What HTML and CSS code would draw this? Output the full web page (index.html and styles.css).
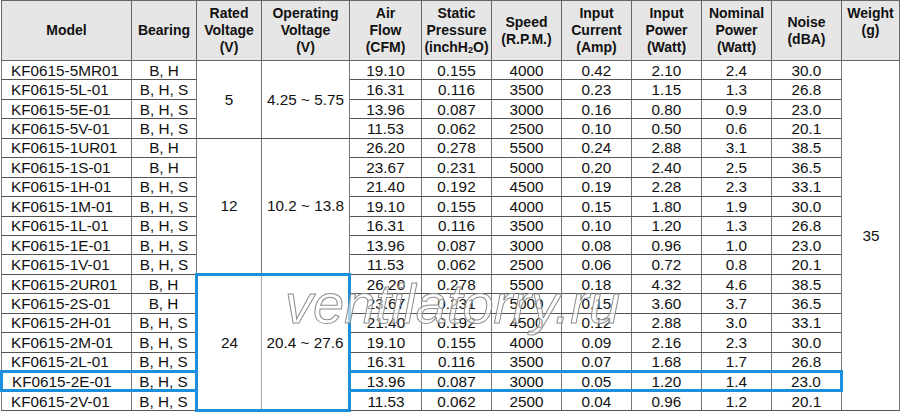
FILE: index.html
```html
<!DOCTYPE html>
<html lang="en">
<head>
<meta charset="utf-8">
<title>KF0615 Specifications</title>
<link rel="stylesheet" href="styles.css">
</head>
<body>
<div class="sheet">
  <table class="spec">
    <colgroup>
      <col class="c-model"><col class="c-bearing"><col class="c-rated"><col class="c-oper">
      <col class="c-air"><col class="c-static"><col class="c-std"><col class="c-std">
      <col class="c-std"><col class="c-std"><col class="c-noise"><col class="c-weight">
    </colgroup>
    <thead>
      <tr>
        <th>Model</th>
        <th>Bearing</th>
        <th>Rated<br>Voltage<br>(V)</th>
        <th>Operating<br>Voltage<br>(V)</th>
        <th>Air<br>Flow<br>(CFM)</th>
        <th>Static<br>Pressure<br>(inchH<sub>2</sub>O)</th>
        <th>Speed<br>(R.P.M.)</th>
        <th>Input<br>Current<br>(Amp)</th>
        <th>Input<br>Power<br>(Watt)</th>
        <th>Nominal<br>Power<br>(Watt)</th>
        <th>Noise<br>(dBA)</th>
        <th class="top">Weight<br>(g)</th>
      </tr>
    </thead>
    <tbody>
      <tr><td class="model">KF0615-5MR01</td><td>B, H</td><td rowspan="4">5</td><td rowspan="4">4.25 ~ 5.75</td><td>19.10</td><td>0.155</td><td>4000</td><td>0.42</td><td>2.10</td><td>2.4</td><td>30.0</td><td rowspan="18">35</td></tr>
      <tr><td class="model">KF0615-5L-01</td><td>B, H, S</td><td>16.31</td><td>0.116</td><td>3500</td><td>0.23</td><td>1.15</td><td>1.3</td><td>26.8</td></tr>
      <tr><td class="model">KF0615-5E-01</td><td>B, H, S</td><td>13.96</td><td>0.087</td><td>3000</td><td>0.16</td><td>0.80</td><td>0.9</td><td>23.0</td></tr>
      <tr><td class="model">KF0615-5V-01</td><td>B, H, S</td><td>11.53</td><td>0.062</td><td>2500</td><td>0.10</td><td>0.50</td><td>0.6</td><td>20.1</td></tr>
      <tr><td class="model">KF0615-1UR01</td><td>B, H</td><td rowspan="7">12</td><td rowspan="7">10.2 ~ 13.8</td><td>26.20</td><td>0.278</td><td>5500</td><td>0.24</td><td>2.88</td><td>3.1</td><td>38.5</td></tr>
      <tr><td class="model">KF0615-1S-01</td><td>B, H</td><td>23.67</td><td>0.231</td><td>5000</td><td>0.20</td><td>2.40</td><td>2.5</td><td>36.5</td></tr>
      <tr><td class="model">KF0615-1H-01</td><td>B, H, S</td><td>21.40</td><td>0.192</td><td>4500</td><td>0.19</td><td>2.28</td><td>2.3</td><td>33.1</td></tr>
      <tr><td class="model">KF0615-1M-01</td><td>B, H, S</td><td>19.10</td><td>0.155</td><td>4000</td><td>0.15</td><td>1.80</td><td>1.9</td><td>30.0</td></tr>
      <tr><td class="model">KF0615-1L-01</td><td>B, H, S</td><td>16.31</td><td>0.116</td><td>3500</td><td>0.10</td><td>1.20</td><td>1.3</td><td>26.8</td></tr>
      <tr><td class="model">KF0615-1E-01</td><td>B, H, S</td><td>13.96</td><td>0.087</td><td>3000</td><td>0.08</td><td>0.96</td><td>1.0</td><td>23.0</td></tr>
      <tr><td class="model">KF0615-1V-01</td><td>B, H, S</td><td>11.53</td><td>0.062</td><td>2500</td><td>0.06</td><td>0.72</td><td>0.8</td><td>20.1</td></tr>
      <tr><td class="model">KF0615-2UR01</td><td>B, H</td><td rowspan="7" class="box-l">24</td><td rowspan="7" class="box-r">20.4 ~ 27.6</td><td>26.20</td><td>0.278</td><td>5500</td><td>0.18</td><td>4.32</td><td>4.6</td><td>38.5</td></tr>
      <tr><td class="model">KF0615-2S-01</td><td>B, H</td><td>23.67</td><td>0.231</td><td>5000</td><td>0.15</td><td>3.60</td><td>3.7</td><td>36.5</td></tr>
      <tr><td class="model">KF0615-2H-01</td><td>B, H, S</td><td>21.40</td><td>0.192</td><td>4500</td><td>0.12</td><td>2.88</td><td>3.0</td><td>33.1</td></tr>
      <tr><td class="model">KF0615-2M-01</td><td>B, H, S</td><td>19.10</td><td>0.155</td><td>4000</td><td>0.09</td><td>2.16</td><td>2.3</td><td>30.0</td></tr>
      <tr><td class="model">KF0615-2L-01</td><td>B, H, S</td><td>16.31</td><td>0.116</td><td>3500</td><td>0.07</td><td>1.68</td><td>1.7</td><td>26.8</td></tr>
      <tr class="hl"><td class="model hl-first">KF0615-2E-01</td><td>B, H, S</td><td>13.96</td><td>0.087</td><td>3000</td><td>0.05</td><td>1.20</td><td>1.4</td><td class="hl-last">23.0</td></tr>
      <tr><td class="model">KF0615-2V-01</td><td>B, H, S</td><td>11.53</td><td>0.062</td><td>2500</td><td>0.04</td><td>0.96</td><td>1.2</td><td>20.1</td></tr>
    </tbody>
  </table>
  <span class="watermark">ventilatorry.ru</span>
</div>
</body>
</html>
```

FILE: styles.css
```css
html, body {
  margin: 0;
  padding: 0;
  background: #ffffff;
}

.sheet {
  position: relative;
  width: 900px;
  height: 412px;
  overflow: hidden;
}

.spec {
  border-collapse: collapse;
  table-layout: fixed;
  width: 898px;
  font-family: "Liberation Sans", Arial, sans-serif;
  color: #111;
}

.c-model { width: 130px; }
.c-bearing { width: 65px; }
.c-rated { width: 65px; }
.c-oper { width: 88px; }
.c-air { width: 72px; }
.c-static { width: 70px; }
.c-std { width: 70px; }
.c-noise { width: 70px; }
.c-weight { width: 58px; }

.spec thead tr {
  height: 60px;
}

.spec th {
  padding: 0;
  background: #e6e6e6;
  border: 1px solid #666;
  font-size: 14px;
  font-weight: bold;
  line-height: 17px;
  text-align: center;
  vertical-align: middle;
}

.spec th.top {
  vertical-align: top;
  padding-top: 4px;
}

.spec th sub {
  font-size: 9px;
  vertical-align: -1px;
  line-height: 0;
}

.spec tbody tr {
  height: 19.44px;
}

.spec td {
  padding: 0;
  border-top: 1px solid #555;
  border-bottom: 1px solid #555;
  border-left: 1px solid #777;
  border-right: 1px solid #777;
  font-size: 15.3px;
  line-height: 15px;
  text-align: center;
  vertical-align: middle;
  white-space: nowrap;
}

.spec td.model {
  text-align: left;
  padding-left: 9px;
}

.spec td.box-l {
  border-left: 3px solid #1b8fdb;
  border-top: 3px solid #1b8fdb;
  border-bottom: 3px solid #1b8fdb;
  border-right: 1px solid #aaa;
}

.spec td.box-r {
  border-right: 3px solid #1b8fdb;
  border-top: 3px solid #1b8fdb;
  border-bottom: 3px solid #1b8fdb;
  border-left: 1px solid #aaa;
}

.spec tr.hl td {
  border-top: 3px solid #1b8fdb;
  border-bottom: 3px solid #1b8fdb;
}

.spec tr.hl td.hl-first {
  border-left: 3px solid #1b8fdb;
}

.spec tr.hl td.hl-last {
  border-right: 3px solid #1b8fdb;
}

.watermark {
  position: absolute;
  left: 285px;
  top: 276px;
  font-family: "Liberation Sans", Arial, sans-serif;
  font-style: italic;
  font-size: 56px;
  line-height: 1;
  color: rgba(255, 255, 255, 0.6);
  -webkit-text-stroke: 1px #8c8c8c;
  pointer-events: none;
  white-space: nowrap;
}
```
